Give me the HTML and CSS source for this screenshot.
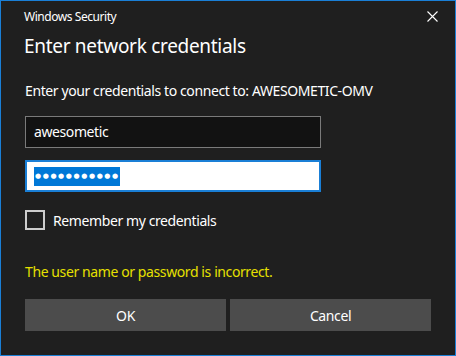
FILE: index.html
```html
<!DOCTYPE html>
<html lang="en">
<head>
    <meta charset="UTF-8">
    <title>Windows Security</title>
    <link rel="stylesheet" href="styles.css">
</head>
<body>
    <div class="dialog">
        <div class="title-bar">
            <span class="title">Windows Security</span>
            <button class="close-btn" aria-label="Close">
                <svg width="11" height="11" viewBox="0 0 11 11">
                    <path d="M0.5 0.5 L10.5 10.5 M10.5 0.5 L0.5 10.5" stroke="#ffffff" stroke-width="1.1" fill="none"/>
                </svg>
            </button>
        </div>

        <div class="content">
            <h1>Enter network credentials</h1>
            <p class="prompt">Enter your credentials to connect to: AWESOMETIC-OMV</p>

            <div class="field">awesometic</div>
            <div class="field field-focus">
                <span class="selection">●●●●●●●●●●●</span>
            </div>

            <label class="remember">
                <span class="checkbox"></span>
                <span>Remember my credentials</span>
            </label>

            <p class="error">The user name or password is incorrect.</p>

            <div class="buttons">
                <button class="btn">OK</button>
                <button class="btn">Cancel</button>
            </div>
        </div>
    </div>
</body>
</html>
```

FILE: styles.css
```css
:root {
    --accent: #1a7fd6;
    --bg: #1f1f1f;
    --text: #ffffff;
    --field-bg: #121212;
    --field-border: #7a7a7a;
    --button-bg: #4c4c4c;
    --error: #e6e000;
}

* {
    margin: 0;
    padding: 0;
    box-sizing: border-box;
}

body {
    font-family: "Noto Sans", "Open Sans", sans-serif;
    background: var(--bg);
    color: var(--text);
    letter-spacing: -0.4px;
}

.dialog {
    width: 456px;
    height: 356px;
    border: 1px solid var(--accent);
    background: var(--bg);
}

.title-bar {
    display: flex;
    justify-content: space-between;
    align-items: center;
    height: 31px;
    padding-left: 23px;
}

.title {
    font-size: 12px;
    letter-spacing: -0.45px;
}

.close-btn {
    width: 46px;
    height: 31px;
    border: none;
    background: transparent;
    display: flex;
    align-items: center;
    justify-content: center;
}

.content {
    padding: 0 24px;
}

h1 {
    font-size: 19px;
    font-weight: 400;
    line-height: 28px;
    letter-spacing: -0.3px;
    margin-left: -1px;
}

.prompt {
    font-size: 14px;
    line-height: 20px;
    margin-top: 21px;
}

.field {
    width: 296px;
    height: 32px;
    border: 1px solid var(--field-border);
    background: var(--field-bg);
    font-size: 14px;
    line-height: 30px;
    padding-left: 8px;
    margin-top: 15px;
}

.field-focus {
    background: #ffffff;
    border: 2px solid var(--accent);
    padding-left: 7px;
    margin-top: 12px;
    display: flex;
    align-items: center;
}

.selection {
    background: #0078d7;
    color: #ffffff;
    font-family: "DejaVu Sans", sans-serif;
    font-size: 7px;
    line-height: 19px;
    letter-spacing: 1.6px;
    padding-left: 1px;
}

.remember {
    display: flex;
    align-items: center;
    gap: 8px;
    margin-top: 18px;
    font-size: 14px;
}

.checkbox {
    width: 20px;
    height: 20px;
    border: 2px solid #cccccc;
}

.error {
    color: var(--error);
    font-size: 14px;
    line-height: 20px;
    margin-top: 32px;
}

.buttons {
    display: flex;
    gap: 4px;
    margin-top: 17px;
}

.btn {
    flex: 1;
    height: 32px;
    border: none;
    background: var(--button-bg);
    color: var(--text);
    font-family: inherit;
    font-size: 14px;
    letter-spacing: -0.4px;
}
```
